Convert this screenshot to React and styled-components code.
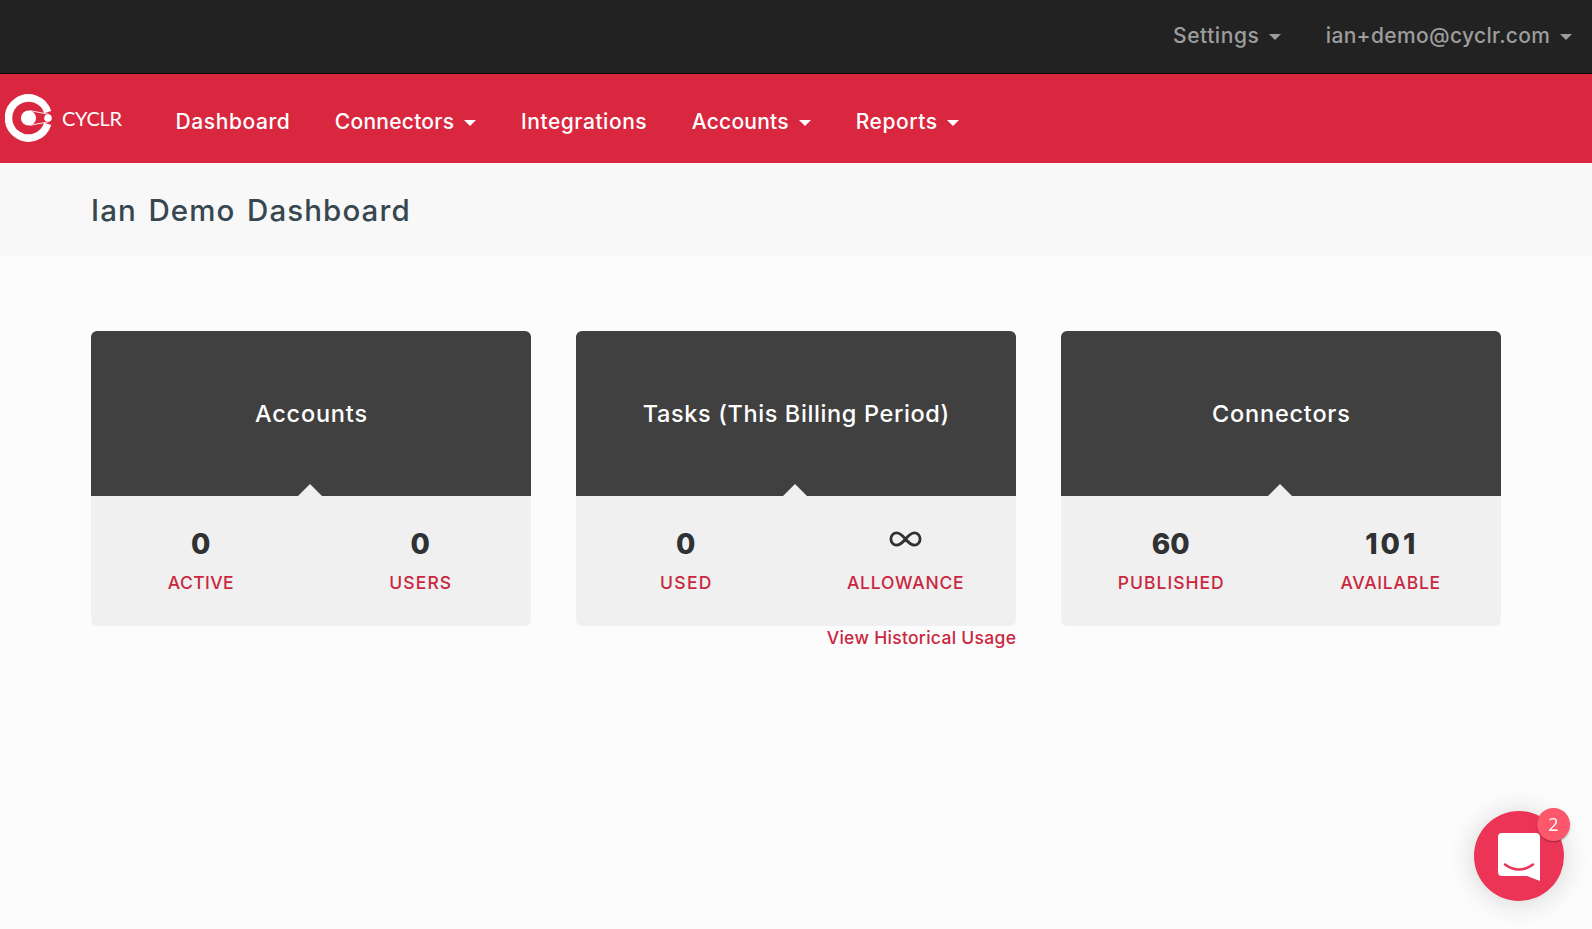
import React from "react";
import styled, { createGlobalStyle, css } from "styled-components";

const Global = createGlobalStyle`
  *, *::before, *::after { box-sizing: border-box; }
  html, body { margin: 0; height: 100%; }
  body { background: #fcfcfc; font-family: Inter, "Liberation Sans", sans-serif; font-weight: 500; }
  a { color: inherit; text-decoration: none; }
`;

/* Letter spacing without the extra gap after the last letter. */
const tracked = css`
  letter-spacing: ${(p) => p.$track || 0}px;
  margin-right: ${(p) => -(p.$track || 0)}px;
`;

const Page = styled.div`
  min-height: 929px;
  background: #fcfcfc;
`;

const TopBar = styled.header`
  height: 74px;
  padding: 0 20px 2px 0;
  display: flex;
  align-items: center;
  justify-content: flex-end;
  gap: 45px;
  background: #222;
  border-bottom: 1px solid #080808;
  color: #9d9d9d;
`;

const NavBar = styled.nav`
  height: 89px;
  display: flex;
  align-items: center;
  gap: 45px;
  background: #d9273f;
  color: #fff;
`;

const Brand = styled.a`
  width: 130px;
  display: flex;
  align-items: center;
  padding: 0 0 1px 5px;
`;

const LogoMark = styled.svg`
  width: 48px;
  height: 48px;
  display: block;
`;

const Wordmark = styled.span`
  margin-left: 9px;
  font: 400 20px/24px Lato, sans-serif;
  letter-spacing: -0.3px;
`;

const Menu = styled.div`
  display: flex;
  gap: 45px;
  padding: 6px 0 0 0.5px;
`;

const MenuLink = styled.a`
  display: flex;
  align-items: center;
  gap: 10px;
  font-size: 21px;
  line-height: 30px;
  white-space: nowrap;
`;

const MenuLabel = styled.span`
  ${tracked}
`;

const Caret = styled.i`
  margin-top: 3px;
  border: 6px solid transparent;
  border-top-color: currentColor;
  border-bottom: 0;
`;

const TitleBar = styled.div`
  height: 93px;
  padding: 0 91px;
  display: flex;
  align-items: center;
  background: #f8f8f8;
`;

const Title = styled.h1`
  margin: 0;
  font-size: 29.5px;
  font-weight: 500;
  color: #37474f;
  letter-spacing: 1.1px;
  word-spacing: 2.6px;
`;

const Cards = styled.main`
  padding: 75px 91px 0;
  display: grid;
  grid-template-columns: repeat(3, 440px);
  gap: 45px;
`;

const Card = styled.section`
  display: flex;
  flex-direction: column;
`;

const CardHead = styled.div`
  position: relative;
  height: 165px;
  display: flex;
  align-items: center;
  justify-content: center;
  border-radius: 6px 6px 0 0;
  background: #404040;

  &::after {
    content: "";
    position: absolute;
    bottom: 0;
    left: 207px;
    border: 12px solid transparent;
    border-top: 0;
    border-bottom-color: #f0f0f0;
  }
`;

const CardTitle = styled.h2`
  margin: 0;
  font-size: 23.5px;
  font-weight: 500;
  color: #fff;
  ${tracked}
`;

const Stats = styled.div`
  height: 130px;
  padding: 28px 1px 0 0;
  display: grid;
  grid-template-columns: 1fr 1fr;
  border-radius: 0 0 6px 6px;
  background: #f0f0f0;
  text-align: center;
`;

const Value = styled.div`
  height: 40px;
  font-size: 28px;
  line-height: 40px;
  font-weight: 800;
  color: #2f3132;
  ${tracked}
`;

const Infinity = styled.svg`
  width: 33px;
  height: 40px;
  display: block;
  margin: 0 auto;
`;

const StatLabel = styled.div`
  font-size: 17.5px;
  line-height: 38px;
  color: #c9273f;
  ${tracked}
`;

const UsageLink = styled.a`
  align-self: flex-end;
  font-size: 17.5px;
  line-height: 24px;
  color: #c9273f;
  ${tracked}
`;

const ChatButton = styled.button`
  position: fixed;
  right: 28px;
  bottom: 28px;
  width: 90px;
  height: 90px;
  padding: 0;
  border: 0;
  border-radius: 50%;
  background: #eb3456;
  box-shadow: 0 2px 28px rgba(0, 0, 0, 0.16);
`;

const ChatIcon = styled.svg`
  display: block;
  width: 90px;
  height: 90px;
`;

const Badge = styled.span`
  position: absolute;
  top: -3px;
  right: -6px;
  width: 33px;
  height: 33px;
  border-radius: 50%;
  background: #fc576b;
  box-shadow: 0 1px 2px rgba(0, 0, 0, 0.35);
  color: #fff;
  font: 400 18px/32px "Open Sans", sans-serif;
  text-align: center;
`;

const navItems = [
  { label: "Dashboard", track: 0.6 },
  { label: "Connectors", track: 0.25, menu: true },
  { label: "Integrations", track: 0.55 },
  { label: "Accounts", track: 0.25, menu: true },
  { label: "Reports", track: 0.55, menu: true },
];

const cards = [
  {
    title: "Accounts",
    track: 0.8,
    stats: [
      { value: "0", label: "ACTIVE", track: 0.4 },
      { value: "0", label: "USERS", track: 1.1 },
    ],
  },
  {
    title: "Tasks (This Billing Period)",
    track: 0.62,
    stats: [
      { value: "0", label: "USED", track: 1.3 },
      { unlimited: true, label: "ALLOWANCE", track: 0.78 },
    ],
    link: "View Historical Usage",
  },
  {
    title: "Connectors",
    track: 0.78,
    stats: [
      { value: "60", label: "PUBLISHED", track: 1 },
      { value: "101", valueTrack: 3, label: "AVAILABLE", track: 0.75 },
    ],
  },
];

function MenuItem({ label, menu, track }) {
  return (
    <MenuLink href="#">
      <MenuLabel $track={track}>{label}</MenuLabel>
      {menu && <Caret />}
    </MenuLink>
  );
}

function StatCard({ title, track, stats, link }) {
  return (
    <Card>
      <CardHead>
        <CardTitle $track={track}>{title}</CardTitle>
      </CardHead>
      <Stats>
        {stats.map((s) => (
          <div key={s.label}>
            <Value $track={s.valueTrack}>
              {s.unlimited ? (
                <Infinity viewBox="0 0 33 40" role="img" aria-label="Unlimited">
                  <path
                    d="M16.5 15C12 9.500 9.500 8.800 7.600 8.800a5.700 6.200 0 0 0 0 12.400C9.500 21.200 12 20.500 16.500 15C21 9.500 23.500 8.800 25.400 8.800a5.700 6.200 0 0 1 0 12.400C23.500 21.200 21 20.500 16.500 15Z"
                    fill="none"
                    stroke="#2f3132"
                    strokeWidth="2.8"
                  />
                </Infinity>
              ) : (
                s.value
              )}
            </Value>
            <StatLabel $track={s.track}>{s.label}</StatLabel>
          </div>
        ))}
      </Stats>
      {link && <UsageLink href="#" $track={0.3}>{link}</UsageLink>}
    </Card>
  );
}

export default function App() {
  return (
    <Page>
      <Global />
      <TopBar>
        <MenuItem label="Settings" track={0.55} menu />
        <MenuItem label="ian+demo@cyclr.com" track={0.33} menu />
      </TopBar>
      <NavBar>
        <Brand href="#">
          <LogoMark viewBox="0 0 48 48">
            <path d="M42.640 18.200A20 20 0 1 0 42.640 29.800" fill="none" stroke="#fff" strokeWidth="7.500" />
            <circle cx="23.500" cy="24" r="7.600" fill="#fff" />
            <circle cx="43" cy="24" r="3.800" fill="#fff" />
            <path d="M25 16.700 43.500 20.200M25 31.300 43.500 27.800" stroke="#fff" strokeWidth="0.900" />
          </LogoMark>
          <Wordmark>CYCLR</Wordmark>
        </Brand>
        <Menu>
          {navItems.map((n) => (
            <MenuItem key={n.label} {...n} />
          ))}
        </Menu>
      </NavBar>
      <TitleBar>
        <Title>Ian Demo Dashboard</Title>
      </TitleBar>
      <Cards>
        {cards.map((c) => (
          <StatCard key={c.title} {...c} />
        ))}
      </Cards>
      <ChatButton aria-label="Open chat">
        <ChatIcon viewBox="0 0 90 90">
          <path d="M28 22H62a4 4 0 0 1 4 4V70L53 65H28a4 4 0 0 1-4-4V26a4 4 0 0 1 4-4Z" fill="#fff" />
          <path d="M31 53.500Q45 63.500 59 53.500" fill="none" stroke="#eb3456" strokeWidth="2.600" strokeLinecap="round" />
        </ChatIcon>
        <Badge>2</Badge>
      </ChatButton>
    </Page>
  );
}
